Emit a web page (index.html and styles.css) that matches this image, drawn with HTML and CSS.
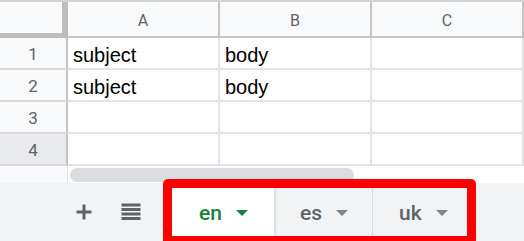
FILE: index.html
```html
<!DOCTYPE html>
<html lang="en">
<head>
    <meta charset="UTF-8">
    <meta name="viewport" content="width=device-width, initial-scale=1.0">
    <title>Sheet tabs</title>
    <link rel="stylesheet" href="styles.css">
</head>

<body>
    <div class="sheet">
        <div class="grid">
            <div class="corner"></div>
            <div class="colhead">A</div>
            <div class="colhead">B</div>
            <div class="colhead">C</div>

            <div class="rowhead">1</div>
            <div class="cell">subject</div>
            <div class="cell">body</div>
            <div class="cell"></div>

            <div class="rowhead">2</div>
            <div class="cell">subject</div>
            <div class="cell">body</div>
            <div class="cell"></div>

            <div class="rowhead">3</div>
            <div class="cell"></div>
            <div class="cell"></div>
            <div class="cell"></div>

            <div class="rowhead rowhead-active">4</div>
            <div class="cell"></div>
            <div class="cell"></div>
            <div class="cell"></div>
        </div>

        <div class="hscroll">
            <div class="hscroll-gutter"></div>
            <div class="hscroll-track">
                <div class="hscroll-thumb"></div>
            </div>
        </div>

        <div class="tabbar">
            <button class="barbtn" title="Add sheet">
                <svg width="20" height="20" viewBox="0 0 20 20">
                    <rect x="8.5" y="2.5" width="3" height="15" fill="#5f6368"/>
                    <rect x="2.5" y="8.5" width="15" height="3" fill="#5f6368"/>
                </svg>
            </button>
            <button class="barbtn" title="All sheets">
                <svg width="20" height="20" viewBox="0 0 20 20">
                    <rect x="0.5" y="1.5" width="19" height="3" fill="#5f6368"/>
                    <rect x="0.5" y="6" width="19" height="3" fill="#5f6368"/>
                    <rect x="0.5" y="10.5" width="19" height="3" fill="#5f6368"/>
                    <rect x="0.5" y="15" width="19" height="3" fill="#5f6368"/>
                </svg>
            </button>

            <!-- red box is the annotation drawn round the tabs -->
            <div class="highlight">
                <div class="tab tab-active tab-en">en <span class="caret"></span></div>
                <div class="tab tab-es">es <span class="caret"></span></div>
                <div class="tab tab-uk">uk <span class="caret"></span></div>
            </div>
        </div>
    </div>
</body>
</html>
```

FILE: styles.css
```css
html, body {
    margin: 0;
    padding: 0;
    overflow: hidden;
}
body {
    width: 524px;
    height: 241px;
    background-color: #ffffff;
}
.sheet {
    border-top: 2px solid #d3d3d3;
}
.grid {
    display: grid;
    grid-template-columns: 68px 152px 152px 152px;
    grid-template-rows: 36px 32px 32px 32px 32px;
}
.corner {
    background-color: #f8f9fa;
    border-right: 6px solid #bdbdbd;
    border-bottom: 5px solid #bdbdbd;
}
.colhead {
    background-color: #f8f9fa;
    border-right: 2px solid #c4c4c4;
    border-bottom: 2px solid #c4c4c4;
    display: flex;
    align-items: center;
    justify-content: center;
    padding-top: 3px;
    font: 400 16px Roboto, Arial, sans-serif;
    color: #5f6368;
    box-sizing: border-box;
}
.rowhead {
    background-color: #f8f9fa;
    border-right: 2px solid #c4c4c4;
    border-bottom: 2px solid #dadada;
    display: flex;
    align-items: center;
    justify-content: center;
    padding-top: 2px;
    font: 400 17px Roboto, Arial, sans-serif;
    color: #5f6368;
    box-sizing: border-box;
}
.rowhead-active {
    background-color: #e8eaed;
}
.cell {
    border-right: 2px solid #e2e3e3;
    border-bottom: 2px solid #e2e3e3;
    display: flex;
    align-items: flex-end;
    padding: 0 0 1px 5px;
    font: 400 20px "Liberation Sans", Arial, sans-serif;
    color: #000000;
    box-sizing: border-box;
}
.hscroll {
    display: flex;
    height: 17px;
}
.hscroll-gutter {
    width: 67px;
    background-color: #f8f9fa;
    border-right: 1px solid #e2e3e3;
}
.hscroll-track {
    flex: 1;
    padding: 2px 0 0 2px;
}
.hscroll-thumb {
    width: 284px;
    height: 14px;
    border-radius: 7px;
    background-color: #dadce0;
}
.tabbar {
    display: flex;
    align-items: center;
    height: 58px;
    padding-left: 74px;
    background-color: #f1f3f4;
}
.barbtn {
    width: 20px;
    height: 20px;
    padding: 0;
    border: 0;
    background: none;
    display: flex;
}
.barbtn + .barbtn {
    margin-left: 27px;
}
.highlight {
    display: flex;
    align-self: flex-start;
    margin: -4px 0 0 22px;
    height: 48px;
    border: 9px solid #ff0000;
    border-radius: 5px;
}
.tab {
    display: flex;
    align-items: center;
    padding-top: 1px;
    font: 500 21px Roboto, Arial, sans-serif;
    color: #5f6368;
    background-color: #f1f3f4;
    box-sizing: border-box;
}
.tab-active {
    color: #188038;
    background-color: #ffffff;
    box-shadow: 1px 0 3px rgba(60, 64, 67, 0.2);
    position: relative;
}
.tab-en {
    width: 102px;
    padding-left: 27px;
}
.tab-es {
    width: 99px;
    padding-left: 26px;
    border-right: 1px solid #dadce0;
}
.tab-uk {
    width: 94px;
    padding-left: 26px;
}
.caret {
    width: 0;
    height: 0;
    margin-left: 14px;
    border-left: 6px solid transparent;
    border-right: 6px solid transparent;
    border-top: 6px solid #80868b;
}
.tab-active .caret {
    border-top-color: #188038;
}
```
